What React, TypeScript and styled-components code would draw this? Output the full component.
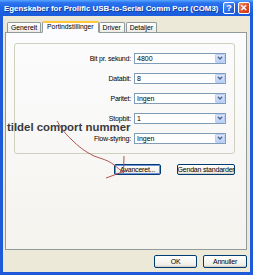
import React from "react";
import styled, { createGlobalStyle } from "styled-components";

const GlobalStyle = createGlobalStyle`
  html, body {
    margin: 0;
    padding: 0;
    background: #ffffff;
  }
  body {
    font-family: "Liberation Sans", Arial, sans-serif;
  }
`

const Window = styled.div`
  position: relative;
  width: 253px;
  height: 275px;
  box-sizing: border-box;
  display: flex;
  flex-direction: column;
  background: #1f5ad8;
  overflow: hidden;
`

const TitleBar = styled.div`
  height: 16px;
  flex: none;
  display: flex;
  align-items: center;
  padding: 0 3px 0 4px;
  background: linear-gradient(#5aa6ff 0, #2a72ee 18%, #1d64e6 55%, #1a5cdc 100%);
`

const TitleText = styled.div`
  flex: 1;
  min-width: 0;
  overflow: hidden;
  color: #ffffff;
  font-weight: bold;
  font-size: 7.9px;
  white-space: nowrap;
  text-shadow: 1px 1px 0 #1a3a90;
`

const CaptionButton = styled.div<{ $close?: boolean }>`
  flex: none;
  width: 12px;
  height: 12px;
  margin-left: 3px;
  box-sizing: border-box;
  border: 1px solid #ffffff;
  border-radius: 2px;
  display: flex;
  align-items: center;
  justify-content: center;
  color: #ffffff;
  font-weight: bold;
  font-size: 9px;
  background: ${p => p.$close
    ? "linear-gradient(135deg, #f0906a, #e0502e 50%, #c8381a)"
    : "linear-gradient(135deg, #6aa0f8, #2f6fe8 50%, #1c55d0)"};
`

const Body = styled.div`
  flex: 1;
  margin: 0 3px 3px;
  background: #ece9d8;
  display: flex;
  flex-direction: column;
  padding: 5px 3px 0 2px;
`

const TabStrip = styled.div`
  display: flex;
  align-items: flex-end;
  height: 11px;
  padding-left: 2px;
  position: relative;
  z-index: 1;
`

const Tab = styled.div<{ $active?: boolean }>`
  box-sizing: border-box;
  height: ${p => p.$active ? "12px" : "10px"};
  margin-bottom: ${p => p.$active ? "-1px" : "0"};
  padding: 0 ${p => p.$active ? "4px" : "3px"};
  margin-right: ${p => p.$active ? "0" : "1px"};
  border: 1px solid #919b9c;
  border-bottom: ${p => p.$active ? "1px solid #fcfcfe" : "none"};
  border-top: ${p => p.$active ? "2px solid #ffc83c" : "1px solid #919b9c"};
  border-radius: 2px 2px 0 0;
  background: ${p => p.$active ? "#fcfcfe" : "linear-gradient(#ffffff, #ecebe6)"};
  font-size: 6.8px;
  line-height: ${p => p.$active ? "8px" : "9px"};
  color: #000000;
  white-space: nowrap;
`

const Panel = styled.div`
  height: 218px;
  box-sizing: border-box;
  border: 1px solid #919b9c;
  background: linear-gradient(#fcfcfe, #f4f3ee);
  padding: 10px 11px 0 8px;
  display: flex;
  flex-direction: column;
`

const GroupBox = styled.div`
  height: 111px;
  box-sizing: border-box;
  border: 1px solid #d0d0bf;
  border-radius: 3px;
  padding: 8px 8px 0 0;
  display: flex;
  flex-direction: column;
  gap: 8px;
`

const Row = styled.div`
  display: flex;
  align-items: center;
  justify-content: flex-end;
  height: 12px;
`

const Label = styled.div`
  font-size: 7px;
  color: #000000;
  margin-right: 3px;
  white-space: nowrap;
  letter-spacing: -0.2px;
`

const Combo = styled.div`
  width: 92px;
  height: 11px;
  box-sizing: border-box;
  border: 1px solid #7f9db9;
  background: #ffffff;
  display: flex;
  align-items: center;
  padding-left: 2px;
`

const ComboValue = styled.div`
  flex: 1;
  font-size: 7px;
  color: #000000;
`

const ComboButton = styled.div`
  width: 10px;
  height: 9px;
  box-sizing: border-box;
  border: 1px solid #b9cdf5;
  border-radius: 1px;
  background: linear-gradient(#dce7fd, #b9cff8);
  display: flex;
  align-items: center;
  justify-content: center;
`

const ButtonRow = styled.div<{ $top: number; $gap: number }>`
  display: flex;
  justify-content: flex-end;
  gap: ${p => p.$gap}px;
  margin-top: ${p => p.$top}px;
`

const Button = styled.div<{ $w: number; $h: number; $focus?: boolean }>`
  width: ${p => p.$w}px;
  height: ${p => p.$h}px;
  box-sizing: border-box;
  border: 1px solid #003c74;
  border-radius: 2px;
  background: linear-gradient(#ffffff, #f0efe8 80%, #d8d5c8);
  box-shadow: ${p => p.$focus ? "inset 0 0 0 1px #6d94dc" : "inset 0 -1px 0 #d6d0c5"};
  display: flex;
  align-items: center;
  justify-content: center;
  font-size: 7px;
  color: #000000;
  white-space: nowrap;
  letter-spacing: -0.2px;
`

const Note = styled.div`
  position: absolute;
  left: 7px;
  top: 121px;
  font-family: "Liberation Sans", Arial, sans-serif;
  font-weight: bold;
  font-size: 11.4px;
  color: #3a3a3a;
  white-space: nowrap;
  z-index: 2;
`

const Scribble = styled.svg`
  position: absolute;
  left: 0;
  top: 0;
  z-index: 3;
  pointer-events: none;
`

function Chevron(): React.JSX.Element {
  return (
    <svg width="6" height="4" viewBox="0 0 6 4">
      <path d="M0.8 0.8 L3 3 L5.2 0.8" fill="none" stroke="#4d6185" strokeWidth="1.3" />
    </svg>
  )
}

const settings = [
  {label: "Bit pr. sekund:", value: "4800"},
  {label: "Databit:", value: "8"},
  {label: "Paritet:", value: "Ingen"},
  {label: "Stopbit:", value: "1"},
  {label: "Flow-styring:", value: "Ingen"},
]

export default function App(): React.JSX.Element {
  return (
    <>
      <GlobalStyle />
      <Window>
        <TitleBar>
          <TitleText>Egenskaber for Prolific USB-to-Serial Comm Port (COM3)</TitleText>
          <CaptionButton>?</CaptionButton>
          <CaptionButton $close>✕</CaptionButton>
        </TitleBar>
        <Body>
          <TabStrip>
            <Tab>Generelt</Tab>
            <Tab $active>Portindstillinger</Tab>
            <Tab>Driver</Tab>
            <Tab>Detaljer</Tab>
          </TabStrip>
          <Panel>
            <GroupBox>
              {settings.map(s => (
                <Row key={s.label}>
                  <Label>{s.label}</Label>
                  <Combo>
                    <ComboValue>{s.value}</ComboValue>
                    <ComboButton><Chevron /></ComboButton>
                  </Combo>
                </Row>
              ))}
            </GroupBox>
            <ButtonRow $top={10} $gap={16}>
              <Button $w={47} $h={11} $focus>Avanceret...</Button>
              <Button $w={58} $h={11}>Gendan standarder</Button>
            </ButtonRow>
          </Panel>
          <ButtonRow $top={5} $gap={6}>
            <Button $w={43} $h={13}>OK</Button>
            <Button $w={44} $h={13}>Annuller</Button>
          </ButtonRow>
        </Body>
        <Note>tildel comport nummer</Note>
        <Scribble width="253" height="275" viewBox="0 0 253 275">
          <path d="M57 121 C60 126 64 133 72 140 C78 146 84 151 94 156 C102 159 108 160 114 165 C118 168 120 170 123 172"
                fill="none" stroke="#a8403a" strokeWidth="0.9" />
          <path d="M124 156 L123.5 173" fill="none" stroke="#a8403a" strokeWidth="0.9" />
          <path d="M106 178 L128 170" fill="none" stroke="#a8403a" strokeWidth="0.9" />
        </Scribble>
      </Window>
    </>
  )
}
